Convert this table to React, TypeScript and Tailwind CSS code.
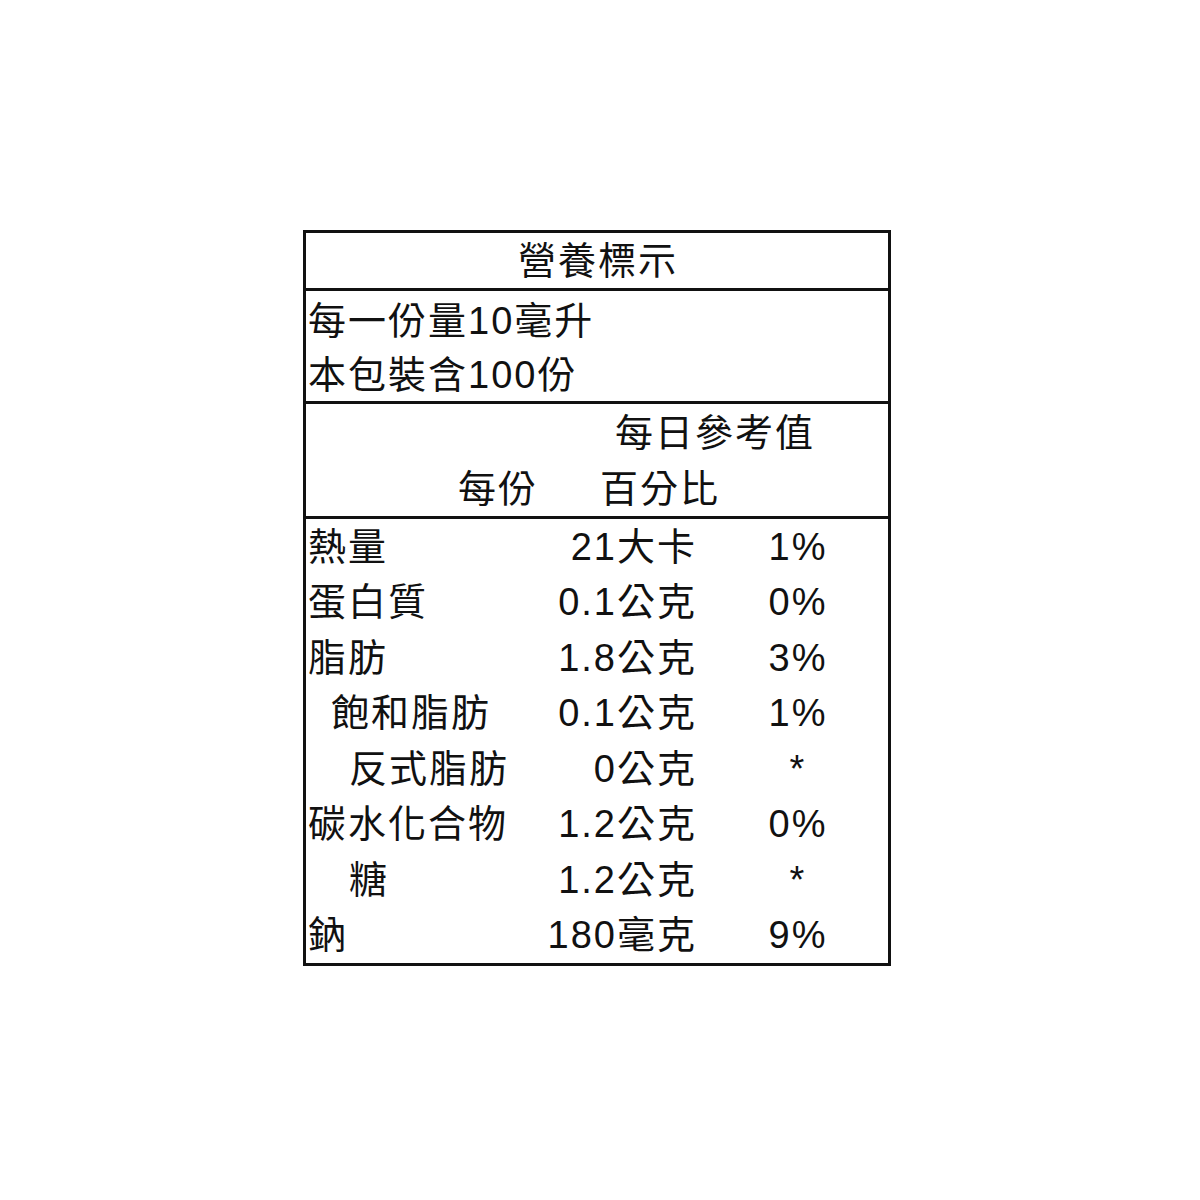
import React from "react";

const rows: { label: string; indent: number; value: string; pct: string }[] = [
  { label: "熱量", indent: 0, value: "21大卡", pct: "1%" },
  { label: "蛋白質", indent: 0, value: "0.1公克", pct: "0%" },
  { label: "脂肪", indent: 0, value: "1.8公克", pct: "3%" },
  { label: "飽和脂肪", indent: 1, value: "0.1公克", pct: "1%" },
  { label: "反式脂肪", indent: 2, value: "0公克", pct: "*" },
  { label: "碳水化合物", indent: 0, value: "1.2公克", pct: "0%" },
  { label: "糖", indent: 2, value: "1.2公克", pct: "*" },
  { label: "鈉", indent: 0, value: "180毫克", pct: "9%" },
];

export default function App() {
  return (
    <div
      className="w-[1200px] h-[1200px] bg-white text-[#111] pt-[230px] pl-[303px]"
      style={{ fontFamily: '"Liberation Sans", "Noto Sans CJK TC", sans-serif' }}
    >
      <div className="w-[588px] border-[3px] border-[#111] text-[38px] tracking-[2px]">
        {/* Title */}
        <div className="h-[58px] flex items-center justify-center border-b-[3px] border-[#111] leading-none">
          <span className="pl-[2px]">營養標示</span>
        </div>
        {/* Serving */}
        <div className="h-[113px] flex flex-col border-b-[3px] border-[#111] pl-[2px] pt-[2px]">
          <div className="h-[55px] flex items-center leading-none">每一份量10毫升</div>
          <div className="h-[53px] flex items-center leading-none">本包裝含100份</div>
        </div>
        {/* Header */}
        <div className="h-[115px] flex flex-col border-b-[3px] border-[#111]">
          <div className="h-[58px] flex items-center leading-none pl-[309px]">每日參考值</div>
          <div className="h-[54px] flex items-center leading-none">
            <span className="pl-[152px] w-[294px]">每份</span>
            <span>百分比</span>
          </div>
        </div>
        {/* Data rows */}
        <div className="flex flex-col">
          {rows.map((r) => (
            <div key={r.label} className="h-[55.5px] flex items-center leading-none">
              <div
                className={
                  "w-[236px] " +
                  (r.indent === 0 ? "pl-[2px]" : r.indent === 1 ? "pl-[25px]" : "pl-[43px]")
                }
              >
                {r.label}
              </div>
              <div className="w-[155px] text-right">{r.value}</div>
              <div className="w-[40px]" />
              <div className="w-[122px] text-center">{r.pct}</div>
            </div>
          ))}
        </div>
      </div>
    </div>
  );
}
